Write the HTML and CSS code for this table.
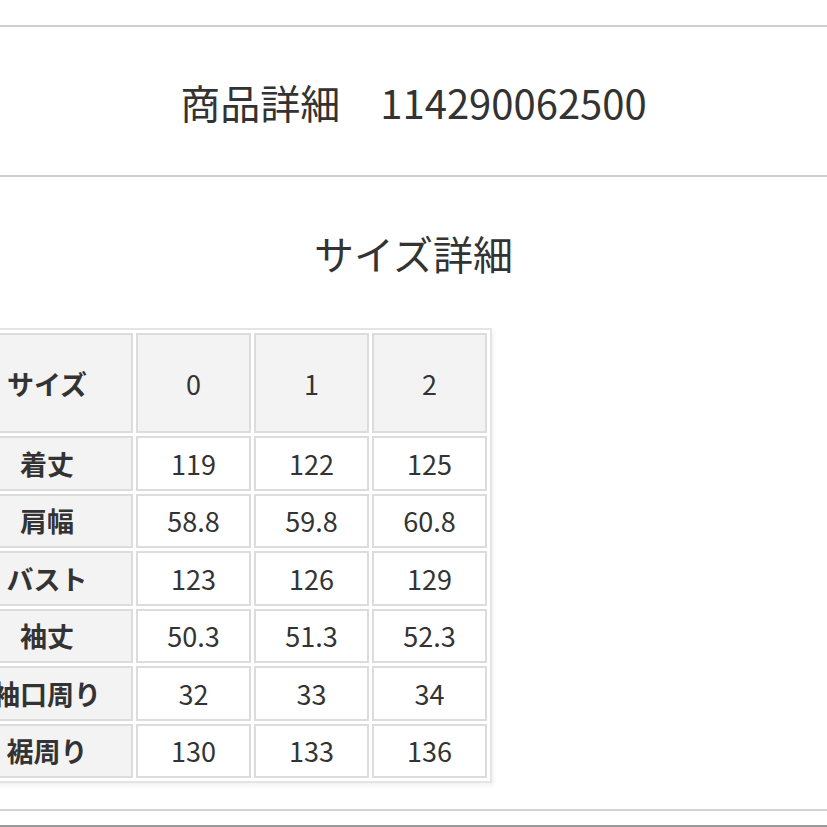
FILE: index.html
```html
<!DOCTYPE html>
<html lang="ja">
<head>
<meta charset="utf-8">
<title>商品詳細</title>
<link rel="stylesheet" href="styles.css">
</head>
<body>
<div class="rule rule-top"></div>
<div class="product">商品詳細　114290062500</div>
<div class="rule"></div>
<h2 class="section-title">サイズ詳細</h2>
<table class="size-table">
  <tr class="head">
    <th class="label">サイズ</th><th>0</th><th>1</th><th>2</th>
  </tr>
  <tr><th class="label">着丈</th><td>119</td><td>122</td><td>125</td></tr>
  <tr><th class="label">肩幅</th><td>58.8</td><td>59.8</td><td>60.8</td></tr>
  <tr><th class="label">バスト</th><td>123</td><td>126</td><td>129</td></tr>
  <tr><th class="label">袖丈</th><td>50.3</td><td>51.3</td><td>52.3</td></tr>
  <tr><th class="label">袖口周り</th><td>32</td><td>33</td><td>34</td></tr>
  <tr><th class="label">裾周り</th><td>130</td><td>133</td><td>136</td></tr>
</table>
<div class="rule rule-bottom"></div>
<div class="rule rule-dark"></div>
</body>
</html>
```
FILE: styles.css
```css
html, body {
  margin: 0;
  padding: 0;
  background: #ffffff;
  overflow: hidden;
}
body {
  font-family: "Noto Sans CJK JP", "Noto Sans", sans-serif;
  color: #333333;
  width: 827px;
  height: 827px;
}
.rule {
  height: 2px;
  background: #cfcfcf;
}
.rule-top {
  margin-top: 25px;
}
.product {
  height: 148px;
  box-sizing: border-box;
  padding-top: 2px;
  display: flex;
  align-items: center;
  justify-content: center;
  font-size: 40px;
  line-height: 1;
  font-weight: 400;
}
.section-title {
  margin: 0;
  height: 151px;
  box-sizing: border-box;
  padding-top: 56px;
  text-align: center;
  font-size: 40px;
  line-height: 1;
  font-weight: 400;
}
.size-table {
  margin-left: -44px;
  border-collapse: separate;
  border-spacing: 3px;
  border: 2px solid #e4e4e4;
  box-shadow: 2px 3px 4px rgba(0, 0, 0, 0.05);
  font-size: 27px;
}
.size-table th,
.size-table td {
  border: 2px solid #dcdcdc;
  width: 111px;
  height: 50.5px;
  padding: 0;
  text-align: center;
  vertical-align: middle;
  background: #ffffff;
  font-weight: 400;
}
.size-table th.label {
  width: 168px;
  font-weight: 700;
  background: #f3f3f3;
}
.size-table tr.head th {
  height: 96px;
  background: #f3f3f3;
}
.rule-bottom {
  margin-top: 26px;
  height: 2px;
  background: #d2d2d2;
}
.rule-dark {
  margin-top: 14px;
  height: 2px;
  background: #9a9a9a;
}
```
